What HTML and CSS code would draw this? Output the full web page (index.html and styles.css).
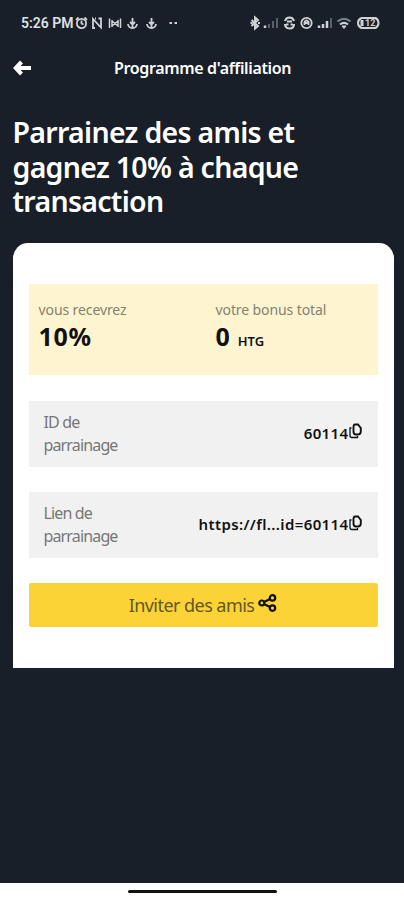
FILE: index.html
```html
<!DOCTYPE html>
<html lang="fr">
<head>
  <meta charset="UTF-8">
  <meta name="viewport" content="width=device-width, initial-scale=1">
  <title>Programme d'affiliation</title>
  <link rel="stylesheet" href="styles.css">
</head>
<body>

  <!-- Status bar -->
  <div class="status-bar">
    <span class="time">5:26 PM</span>
    <svg class="status-left" width="106" height="16" viewBox="0 0 106 16" fill="none" stroke="#cfd2d5" stroke-width="1.8">
      <circle cx="7.500" cy="8.500" r="4.600"/>
      <path d="M7.500 5.500v3l2 1M2 5l2.500-2.500M13 5l-2.500-2.500"/>
      <path d="M21 13h-2V4l8 8.500V3.500h-2.500M22 3.500h-1"/>
      <path d="M35.500 3.500v9.500M46.500 3.500v9.500M38 5v7M44 5v7M38 6l6 5M44 6l-6 5" stroke-width="1.500"/>
      <path d="M58.500 3v9M56 7l2.500 2.500L61 7M54 9q.5 4 4.500 4T63 9"/>
      <path d="M77.500 3v9M75 7l2.500 2.500L80 7M73 9q.5 4 4.500 4T82 9"/>
      <path d="M95.500 8h2.500M100.500 8h2.500" stroke-width="2.200"/>
    </svg>
    <svg class="status-right" width="132" height="16" viewBox="0 0 132 16" fill="none" stroke="#cfd2d5" stroke-width="1.800">
      <path d="M2.500 5l6.500 6-3 2.500v-11L9 5l-6.500 6M1.500 8h2M9 8h2" stroke-width="2"/>
      <path d="M16 13v-2.500" stroke-width="2.500"/>
      <path d="M20 13V9M24 13V6M28 13V3" stroke="#57606a" stroke-width="2"/>
      <path d="M36 6q1-3.500 4.500-3.500T45 6M38 6.500h5M36 9q0 4.500 4.500 4.500T45 9M37 9.500h2.500M41.500 9.500H44" stroke-width="2.100"/>
      <circle cx="57.500" cy="8" r="5.200"/>
      <path d="M55.500 10V7q2-3 4 0v3M55.500 8h4"/>
      <path d="M70 13v-2.500M74 13V9M78 13V6" stroke-width="2.500"/>
      <path d="M82 13V3" stroke="#57606a" stroke-width="2"/>
      <path d="M88.500 6.500q6.500-5.500 13 0" stroke="#7b838a"/>
      <path d="M91 9.500q4-3.300 8 0" stroke-width="2"/>
      <path d="M93 11l2 2.500 2-2.500z" fill="#cfd2d5" stroke-width="1"/>
      <path d="M112.500 3h14q3 1.500 3 5t-3 5h-14Q109 11.500 109 8t3.500-5z" stroke-width="2"/>
      <path d="M113 5v6" stroke-width="3"/>
      <text x="116" y="11.200" class="battery">12</text>
    </svg>
  </div>

  <div class="header">
    <svg class="back" width="18" height="16" viewBox="0 0 18 16" fill="none" stroke="#fff" stroke-width="4">
      <path d="M8.500 2L2.800 8l5.700 6M3.500 8H18"/>
    </svg>
    <span class="header-title">Programme d'affiliation</span>
  </div>

  <h1>Parrainez des amis et<br>gagnez 10% à chaque<br>transaction</h1>

  <div class="card">
    <div class="bonus">
      <div class="bonus-item">
        <div class="bonus-label">vous recevrez</div>
        <div class="bonus-value">10%</div>
      </div>
      <div class="bonus-item">
        <div class="bonus-label">votre bonus total</div>
        <div class="bonus-value">0 <small>HTG</small></div>
      </div>
    </div>

    <div class="row">
      <div class="row-label">ID de parrainage</div>
      <div class="row-value">
        <span>60114</span>
        <svg class="copy" width="14" height="17" viewBox="0 0 14 17" fill="none" stroke="#111" stroke-width="1.900">
          <path d="M7 1.500h3L12.800 5v3.500q0 3-3 3H8q-2.500 0-2.500-3V4q0-2.500 1.500-2.500z"/>
          <path d="M3.500 5H2v7.500q0 2 2 2h5.500v-1.500" stroke-width="1.300"/>
        </svg>
      </div>
    </div>

    <div class="row">
      <div class="row-label">Lien de parrainage</div>
      <div class="row-value">
        <span>https://fl...id=60114</span>
        <svg class="copy" width="14" height="17" viewBox="0 0 14 17" fill="none" stroke="#111" stroke-width="1.900">
          <path d="M7 1.500h3L12.800 5v3.500q0 3-3 3H8q-2.500 0-2.500-3V4q0-2.500 1.500-2.500z"/>
          <path d="M3.500 5H2v7.500q0 2 2 2h5.500v-1.500" stroke-width="1.300"/>
        </svg>
      </div>
    </div>

    <button class="invite">
      <span>Inviter des amis</span>
      <svg class="share" width="19" height="18" viewBox="0 0 19 18" fill="none" stroke="#111" stroke-width="2.200">
        <circle cx="3.800" cy="9" r="2.500"/>
        <circle cx="14.500" cy="3.900" r="2.700"/>
        <circle cx="14.500" cy="14.100" r="2.700"/>
        <path d="M6 8l6-3M6 10l6 3"/>
      </svg>
    </button>
  </div>

  <!-- System navigation -->
  <div class="nav-bar">
    <div class="nav-handle"></div>
  </div>

</body>
</html>
```

FILE: styles.css
```css
* {
  box-sizing: border-box;
}
body {
  margin: 0;
  height: 900px;
  display: flex;
  flex-direction: column;
  overflow: hidden;
  background-color: #181f28;
  color: #fff;
  font-family: "Noto Sans", "Open Sans", sans-serif;
}
.status-bar {
  display: flex;
  align-items: center;
  height: 46px;
  padding: 0 23px 0 21px;
}
.time {
  width: 53px;
  font-family: Roboto, sans-serif;
  font-size: 14px;
  font-weight: 600;
  white-space: nowrap;
  color: #dfe2e4;
}
.status-right {
  margin-left: auto;
}
.battery {
  font-family: Roboto, sans-serif;
  font-size: 9px;
  font-weight: 700;
  fill: #cfd2d5;
  stroke: none;
}
.header {
  display: grid;
  grid-template-columns: 101px 1fr;
  align-items: center;
  height: 44px;
  padding-left: 13px;
}
.header-title {
  font-size: 16px;
  font-weight: 600;
  letter-spacing: -0.35px;
}
h1 {
  margin: 25px 0 0 12.5px;
  font-size: 28.5px;
  font-weight: 600;
  line-height: 34.5px;
  letter-spacing: -0.7px;
}
.card {
  width: 381px;
  height: 425px;
  margin: 24.5px 0 0 12.5px;
  padding: 41px 16px 0;
  background-color: #fff;
  border-radius: 15px 15px 0 0;
  color: #111;
}
.bonus {
  display: grid;
  grid-template-columns: 177px 1fr;
  height: 91px;
  padding: 16px 10px;
  background-color: #fef5d0;
}
.bonus-label {
  font-size: 14px;
  line-height: 20px;
  letter-spacing: -0.1px;
  color: #85816f;
}
.bonus-value {
  font-size: 25px;
  font-weight: 700;
  line-height: 32px;
  letter-spacing: 0.7px;
}
.bonus-value small {
  font-size: 13px;
  font-weight: 600;
  letter-spacing: 0;
}
.row {
  display: flex;
  justify-content: space-between;
  align-items: center;
  height: 66px;
  margin-top: 25.5px;
  padding: 0 16px 0 15px;
  background-color: #f1f1f1;
}
.row-label {
  width: 90px;
  font-size: 16px;
  line-height: 23px;
  letter-spacing: -0.85px;
  color: #777;
}
.row-value {
  display: flex;
  align-items: center;
  margin-top: -2px;
  font-size: 15px;
  font-weight: 600;
  letter-spacing: 0.38px;
}
.copy {
  margin: -2px 0 0 -1px;
}
.invite {
  display: flex;
  justify-content: center;
  align-items: center;
  gap: 4px;
  width: 100%;
  height: 44px;
  margin-top: 25px;
  padding: 0;
  border: none;
  border-radius: 2px;
  background-color: #fcd336;
  color: #645726;
  font-family: inherit;
  font-size: 18px;
  letter-spacing: -0.55px;
}
.share {
  margin-bottom: 5px;
}
.nav-bar {
  display: flex;
  justify-content: center;
  height: 17px;
  margin-top: auto;
  padding-top: 7px;
  background-color: #fff;
}
.nav-handle {
  width: 149px;
  height: 3px;
  border-radius: 2px;
  background-color: #111;
}
```
